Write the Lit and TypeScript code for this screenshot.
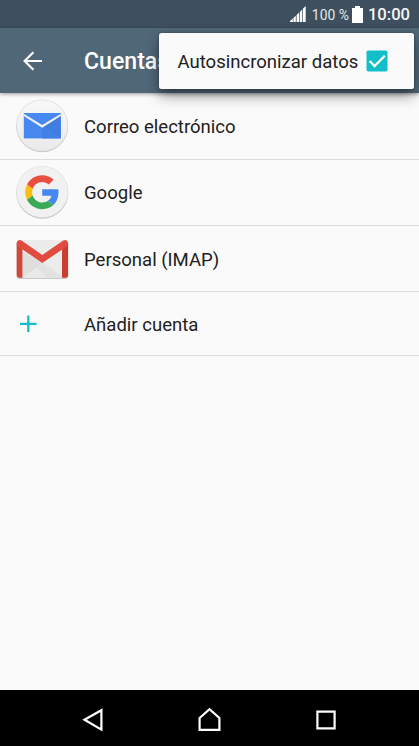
import { LitElement, html, css } from "lit";
import { customElement } from "lit/decorators.js";

const mailIcon = html`<svg width="56" height="56" viewBox="0 0 56 56">
  <defs>
    <linearGradient id="disc" x1="0" y1="0" x2="0" y2="1">
      <stop offset="0" stop-color="#f8f8f8" /><stop offset="1" stop-color="#eaeaea" />
    </linearGradient>
  </defs>
  <circle cx="28.2" cy="28.2" r="26" fill="#c9c9c9" />
  <circle cx="28.2" cy="27.4" r="25.9" fill="#dedede" />
  <circle cx="28.2" cy="27.5" r="25.3" fill="url(#disc)" />
  <rect x="9.8" y="15" width="37" height="25.2" fill="#4788f2" />
  <path d="M28.2 28.6L46.8 15V40.2H28.2z" fill="#3f7de3" />
  <path d="M9.8 40.2L28.2 28.6L46.8 40.2z" fill="#4a88ee" />
  <path d="M28.2 28.6L46.8 40.2H28.2z" fill="#4380e6" />
  <path d="M9.8 15H46.8L28.2 26.6z" fill="#4788f2" />
  <path d="M9.8 15.8V18L28.2 29.8L46.8 18V15.8L28.2 27z" fill="#f1f1f1" />
</svg>`;

const googleIcon = html`<svg width="56" height="56" viewBox="0 0 56 56">
  <circle cx="28.3" cy="28.7" r="26" fill="#c4c4c4" />
  <circle cx="28.3" cy="27.8" r="25.9" fill="#e2e2e2" />
  <circle cx="28.3" cy="27.9" r="25.4" fill="#f1f1f1" />
  <g transform="translate(11.2 11.2) scale(.7083)">
    <path fill="#ea4e41" d="M24 9.5c3.54 0 6.71 1.22 9.21 3.6l6.85-6.85C35.9 2.38 30.47 0 24 0 14.62 0 6.51 5.38 2.56 13.22l7.98 6.19C12.43 13.72 17.74 9.5 24 9.5z" />
    <path fill="#4688f1" d="M46.98 24.55c0-1.57-.15-3.09-.38-4.55H24v9.02h12.94c-.58 2.96-2.26 5.48-4.78 7.18l7.73 6c4.51-4.18 7.09-10.36 7.09-17.65z" />
    <path fill="#fcbd12" d="M10.53 28.59c-.48-1.45-.76-2.99-.76-4.59s.27-3.14.76-4.59l-7.98-6.19C.92 16.46 0 20.12 0 24c0 3.88.92 7.54 2.56 10.78l7.97-6.19z" />
    <path fill="#3aaa57" d="M24 48c6.48 0 11.93-2.13 15.89-5.81l-7.73-6c-2.15 1.45-4.92 2.3-8.16 2.3-6.26 0-11.57-4.22-13.47-9.91l-7.98 6.19C6.51 42.62 14.62 48 24 48z" />
  </g>
</svg>`;

const gmailIcon = html`<svg width="56" height="56" viewBox="0 0 56 56">
  <rect x="2.7" y="10.5" width="51.4" height="37.2" rx="3" fill="#b9b9b9" />
  <path d="M6 9H51V46.8H6z" fill="#ececec" />
  <path d="M8 46.8L28.3 28L49 46.8z" fill="#e9e9e9" />
  <path d="M28.3 32L8 46.8V20z" fill="#dedede" />
  <path d="M22 36L28.3 32L49 46.8H33z" fill="#e2e2e2" />
  <path d="M2.7 12V43.8a3 3 0 0 0 3 3H8.4V18z" fill="#d34638" />
  <path d="M54.1 12V43.8a3 3 0 0 1-3 3H48V18z" fill="#c94033" />
  <path d="M2.7 12.2C2.7 9.7 5.2 8.1 7.6 9.6L28.3 23.9L49.2 9.6C51.6 8.1 54.1 9.7 54.1 12.2C54.1 13.7 53.5 14.9 52 15.9L28.3 32L4.8 15.9C3.3 14.9 2.7 13.7 2.7 12.2z" fill="#e04c40" />
</svg>`;

const addIcon = html`<svg width="56" height="56" viewBox="0 0 56 56">
  <path d="M6 27.8H22.6M14.3 19.5V36.1" stroke="#12bfc9" stroke-width="2.3" fill="none" />
</svg>`;

const accounts = [
  { label: "Correo electrónico", icon: mailIcon, kind: "mail" },
  { label: "Google", icon: googleIcon, kind: "google" },
  { label: "Personal (IMAP)", icon: gmailIcon, kind: "imap" },
  { label: "Añadir cuenta", icon: addIcon, kind: "add" },
];

@customElement("app-root")
export class AppRoot extends LitElement {
  static styles = css`
    :host {
      display: flex;
      flex-direction: column;
      position: relative;
      height: 746px;
      overflow: hidden;
      background: #fafafa;
      color: #212121;
      font-family: Roboto, sans-serif;
    }
    svg { display: block; flex: none; }
    .status {
      height: 28px;
      flex: none;
      display: flex;
      align-items: center;
      justify-content: flex-end;
      padding-right: 9px;
      background: #3e505f;
      color: #fff;
    }
    .percent { font-size: 13.9px; margin: 1px 3px 0 6px; color: #e4e8ea; white-space: nowrap; }
    .clock { font-size: 16.6px; font-weight: 500; margin: 1px 0 0 5px; color: #f4f6f7; }
    .bar {
      height: 65px;
      flex: none;
      display: flex;
      align-items: center;
      padding-left: 20px;
      background: #506778;
      box-shadow: 0 1px 4px rgba(0, 0, 0, 0.4);
      z-index: 1;
    }
    .title {
      margin: 1px 0 0 40px;
      font-size: 23.1px;
      font-weight: 500;
      color: #fff;
    }
    .menu {
      position: absolute;
      z-index: 2;
      top: 32.5px;
      left: 158.5px;
      width: 255.5px;
      height: 56px;
      box-sizing: border-box;
      padding: 0 26px 0 19px;
      display: flex;
      align-items: center;
      justify-content: space-between;
      background: #fafafa;
      border-radius: 2.5px;
      box-shadow: 0 7px 13px rgba(0, 0, 0, 0.4), 0 0 3px rgba(0, 0, 0, 0.3);
      font-size: 18.55px;
      white-space: nowrap;
    }
    .menu span { margin-top: 2px; }
    .list { flex: 1; }
    .row {
      display: flex;
      align-items: center;
      gap: 14px;
      height: 66px;
      box-sizing: border-box;
      padding-left: 14px;
      border-bottom: 1px solid #dcdcdc;
      font-size: 18.55px;
    }
    .row span { margin-top: 2px; }
    .mail { height: 66.5px; }
    .google { height: 66.5px; }
    .add { height: 64px; }
    .nav {
      height: 56px;
      flex: none;
      display: flex;
      align-items: center;
      justify-content: center;
      gap: 84px;
      background: #000;
    }
    .nav svg { margin-top: 4px; }
  `;

  render() {
    return html`
      <div class="status">
        <svg width="16" height="16" viewBox="0 0 16 16" fill="#fff">
          <path d="M0 16V15L2.8 12.6V16zM3.4 16V12L5.8 9.8V16zM6.6 16V9L9.1 6.6V16zM9.8 16V6L12.2 3.6V16zM12.9 16V2.8L15.7 0V16z" />
        </svg>
        <span class="percent">100 %</span>
        <svg width="11" height="17" viewBox="0 0 11 17"><path d="M3 0H8V2H11V17H0V2H3z" fill="#fff" /></svg>
        <span class="clock">10:00</span>
      </div>
      <header class="bar">
        <svg width="24" height="24" viewBox="0 0 24 24" fill="none" stroke="#fff" stroke-width="2.2">
          <path d="M22 12H5M13.4 3.2L4.6 12L13.4 20.8" />
        </svg>
        <span class="title">Cuentas</span>
      </header>
      <div class="menu">
        <span>Autosincronizar datos</span>
        <svg width="22" height="22" viewBox="0 0 22 22">
          <rect x=".5" y=".5" width="21" height="21" rx="1.8" fill="#12bfc9" />
          <path d="M3.6 11L8.6 16L18.8 5.8" fill="none" stroke="#fff" stroke-width="2.3" />
        </svg>
      </div>
      <main class="list">
        ${accounts.map((a) => html`<div class="row ${a.kind}">${a.icon}<span>${a.label}</span></div>`)}
      </main>
      <nav class="nav">
        <svg width="32" height="32" viewBox="0 0 32 32" fill="none" stroke="#fff" stroke-width="2.2"><path d="M6.5 15.8L23.4 6.2V25.6z" /></svg>
        <svg width="32" height="32" viewBox="0 0 32 32" fill="none" stroke="#fff" stroke-width="2.2"><path d="M5.6 14L15.5 5.2L25.4 14V25.8H5.6z" /></svg>
        <svg width="32" height="32" viewBox="0 0 32 32" fill="none" stroke="#fff" stroke-width="2.2"><path d="M7.4 7.6H24.6V24.4H7.4z" /></svg>
      </nav>
    `;
  }
}
